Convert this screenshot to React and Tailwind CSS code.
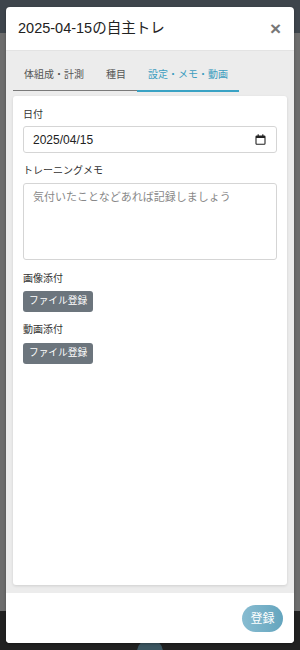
import { useState } from 'react';

const FONT = { fontFamily: '"Helvetica Neue", "Liberation Sans", "Noto Sans CJK JP", sans-serif' };

const TABS = ['体組成・計測', '種目', '設定・メモ・動画'];

const App = () => {
  const [tab, setTab] = useState(2);
  const [memo, setMemo] = useState('');

  return (
    <div className="relative w-[300px] h-[650px] overflow-hidden" style={FONT}>
      {/* backdrop page */}
      <div className="flex flex-col h-full">
        <div className="h-[33px] bg-[#3e454c]" />
        <div className="flex-1 bg-[#6d6d6d]" />
        <div className="h-[39px] bg-[#212121] flex justify-center">
          <div className="w-[26px] h-[26px] rounded-full bg-[#3b5661] mt-[28px]" />
        </div>
      </div>

      {/* modal */}
      <div className="absolute left-[6px] top-[7px] w-[288px] h-[636px] bg-white rounded-[4px] flex flex-col overflow-hidden shadow-[0_1px_3px_rgba(0,0,0,0.3)]">
        <div className="h-[44px] flex items-center justify-between pl-[12px] pr-[13px] border-b border-[#e3e3e3] shrink-0">
          <h2 className="text-[14.5px] text-[#222]">2025-04-15の自主トレ</h2>
          <button className="text-[#777] text-[19px] font-bold leading-none">×</button>
        </div>

        <div className="flex-1 bg-[#ececec] px-[7px] pt-[8px] pb-[8px] flex flex-col">
          <div className="flex">
            {TABS.map((t, i) => (
              <button key={t} onClick={() => setTab(i)}
                className={`px-[11px] pt-[8px] pb-[8px] text-[10px] ${i === tab ? 'text-[#3d9dbf] border-b-[2px] border-[#39a2c4]' : 'text-[#555] border-b border-[#7a7a7a] mb-[1px]'}`}>
                {t}
              </button>
            ))}
          </div>

          <div className="flex-1 mt-[4px] bg-white rounded-[3px] shadow-[0_1px_3px_rgba(0,0,0,0.12)] px-[10px] pt-[11px]">
            <label className="block text-[10px] text-[#333]">日付</label>
            <div className="mt-[4px] h-[27px] border border-[#d5d5d5] rounded-[3px] flex items-center justify-between pl-[9px] pr-[10px]">
              <span className="text-[12px] text-[#222]">2025/04/15</span>
              <svg width="11" height="11" viewBox="0 0 11 11" fill="none">
                <rect x="1" y="2" width="9" height="8.3" rx="0.8" stroke="#222" strokeWidth="1.1" />
                <rect x="1" y="2" width="9" height="2" fill="#222" />
                <rect x="2.6" y="0.3" width="1.2" height="2" fill="#222" />
                <rect x="7.2" y="0.3" width="1.2" height="2" fill="#222" />
              </svg>
            </div>

            <label className="block mt-[10px] text-[10px] text-[#333]">トレーニングメモ</label>
            <textarea value={memo} onChange={e => setMemo(e.target.value)}
              placeholder="気付いたことなどあれば記録しましょう"
              className="mt-[5px] block w-full h-[77px] border border-[#d5d5d5] rounded-[3px] px-[9px] py-[5px] text-[11px] placeholder:text-[#888] resize-none outline-none" />

            <label className="block mt-[11px] text-[10px] text-[#333]">画像添付</label>
            <button className="mt-[5px] h-[21px] px-[6px] bg-[#6c757d] text-white text-[9.7px] rounded-[3px]">ファイル登録</button>

            <label className="block mt-[10px] text-[10px] text-[#333]">動画添付</label>
            <button className="mt-[6px] h-[21px] px-[6px] bg-[#6c757d] text-white text-[9.7px] rounded-[3px]">ファイル登録</button>
          </div>
        </div>

        <div className="h-[50px] shrink-0 flex items-start justify-end pt-[12px] pr-[11px] bg-white">
          <button className="w-[41px] h-[27px] rounded-full text-white text-[12px] bg-gradient-to-r from-[#88bcd1] to-[#64a5be]">登録</button>
        </div>
      </div>
    </div>
  );
};

export default App;
